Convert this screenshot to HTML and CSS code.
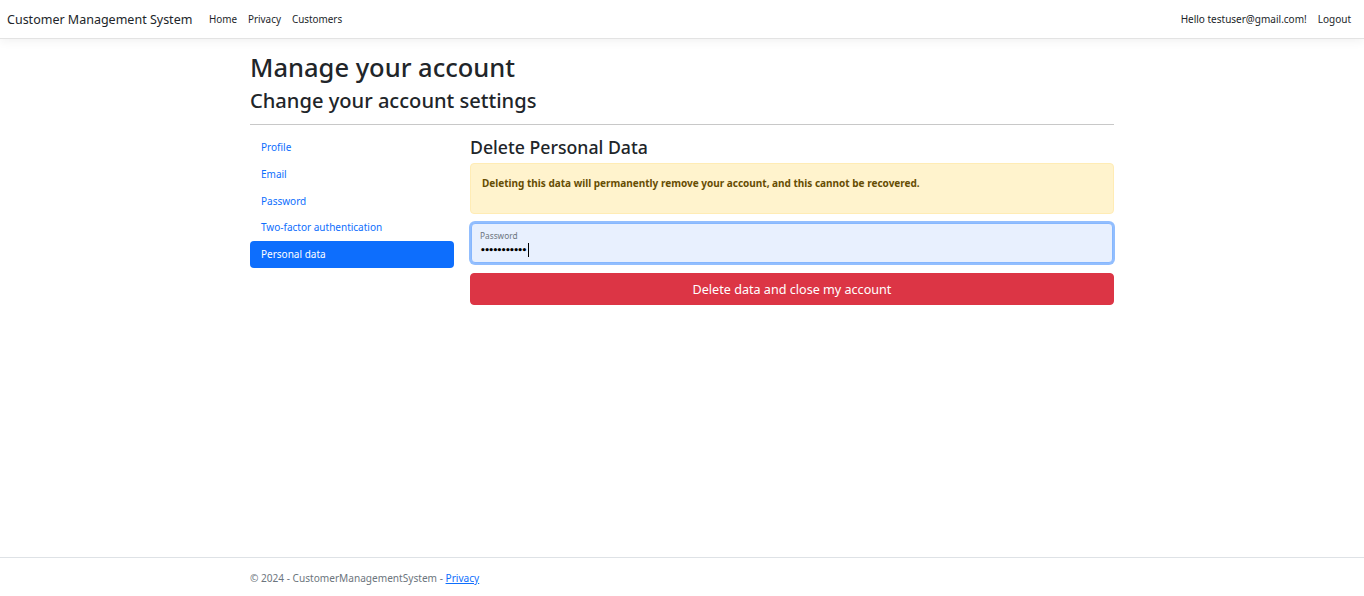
FILE: index.html
```html
<!DOCTYPE html>
<html lang="en">
<head>
<meta charset="utf-8">
<title>Personal Data - Customer Management System</title>
<link rel="stylesheet" href="styles.css">
</head>
<body>
<header class="navbar">
  <div class="nav-left">
    <a class="brand" href="#">Customer Management System</a>
    <nav class="nav-links">
      <a href="#">Home</a>
      <a href="#">Privacy</a>
      <a href="#">Customers</a>
    </nav>
  </div>
  <div class="nav-right">
    <a href="#">Hello testuser@gmail.com!</a>
    <a href="#">Logout</a>
  </div>
</header>
<main class="container">
  <h1 class="title">Manage your account</h1>
  <h2 class="subtitle">Change your account settings</h2>
  <hr class="divider">
  <div class="row">
    <aside class="side">
      <ul class="pills">
        <li><a href="#">Profile</a></li>
        <li><a href="#">Email</a></li>
        <li><a href="#">Password</a></li>
        <li><a href="#">Two-factor authentication</a></li>
        <li><a class="active" href="#">Personal data</a></li>
      </ul>
    </aside>
    <section class="content">
      <h3 class="section-title">Delete Personal Data</h3>
      <div class="alert">
        <p><strong>Deleting this data will permanently remove your account, and this cannot be recovered.</strong></p>
      </div>
      <div class="floating">
        <label class="float-label">Password</label>
        <div class="float-value"><span class="dots">•••••••••••</span><span class="caret"></span></div>
      </div>
      <button class="btn-danger" type="button">Delete data and close my account</button>
    </section>
  </div>
</main>
<footer class="footer">
  <div class="footer-inner">© 2024 - CustomerManagementSystem - <a href="#">Privacy</a></div>
</footer>
</body>
</html>
```

FILE: styles.css
```css
* { box-sizing: border-box; }
html, body { margin: 0; padding: 0; }
body {
  height: 596px;
  display: flex;
  flex-direction: column;
  font-family: "Noto Sans", "Open Sans", "Liberation Sans", sans-serif;
  color: #212529;
  background: #fff;
  font-size: 10px;
}
a { text-decoration: none; }

.navbar {
  height: 39px;
  flex: 0 0 39px;
  display: flex;
  align-items: center;
  justify-content: space-between;
  padding: 0 13px 0 7px;
  border-bottom: 1px solid #e3e3e3;
  box-shadow: 0 3px 9px rgba(0,0,0,0.05);
}
.nav-left { display: flex; align-items: center; }
.brand { font-size: 12.5px; color: #212529; margin-right: 11px; }
.nav-links { display: flex; }
.nav-links a { color: #212529; padding: 0 5.5px; font-size: 9.9px; }
.nav-right { display: flex; }
.nav-right a { color: #212529; padding: 0 5.5px; font-size: 10px; }
.nav-right a:last-child { padding-right: 0; }

.container {
  flex: 1;
  width: 864px;
  margin: 0 auto;
  padding-top: 12px;
}
.title { font-size: 25.5px; font-weight: 500; margin: 0; line-height: 32px; }
.subtitle { font-size: 20.1px; font-weight: 500; margin: 3px 0 0; line-height: 30px; }
.divider { border: 0; border-top: 1px solid #c8c8c8; margin: 8px 0 9px; }

.row { display: flex; gap: 16px; }
.side { width: 204px; flex: 0 0 204px; }
.pills { list-style: none; margin: 0; padding: 0; }
.pills a {
  display: block;
  height: 26.8px;
  line-height: 25.8px;
  padding: 1px 11px 0;
  color: #0d6efd;
  border-radius: 4px;
  font-size: 10px;
}
.pills a.active { background: #0d6efd; color: #fff; }

.content { flex: 1; }
.section-title { font-size: 17.7px; font-weight: 500; margin: 1px 0 4px; line-height: 24px; }
.alert {
  background: #fff3cd;
  border: 1px solid #ffecb5;
  color: #664d03;
  border-radius: 4px;
  padding: 12px 11px;
  margin-bottom: 9px;
}
.alert p { margin: 0 0 11px; font-size: 10px; line-height: 14px; }
.alert strong { font-weight: 700; }

.floating {
  height: 40px;
  background: #e8f0fe;
  border: 1px solid #86b7fe;
  border-radius: 4px;
  box-shadow: 0 0 0 2px rgba(13,110,253,0.45);
  padding: 6px 8px 0;
  margin: 0 1px 10px;
}
.float-label { display: block; font-size: 8.3px; color: #6c757d; line-height: 12px; }
.float-value { display: flex; align-items: center; height: 16px; }
.dots { font-size: 9px; letter-spacing: -1.6px; color: #000; font-family: "DejaVu Sans", sans-serif; font-weight: 700; }
.caret { display: inline-block; width: 1px; height: 14px; background: #000; margin-left: 2px; }

.btn-danger {
  display: block;
  width: 100%;
  height: 32px;
  background: #dc3545;
  border: 1px solid #dc3545;
  border-radius: 4px;
  color: #fff;
  font-family: inherit;
  font-size: 12.6px;
}

.footer {
  flex: 0 0 39px;
  border-top: 1px solid #dee2e6;
  color: #6c757d;
  display: flex;
  align-items: center;
  padding-top: 2px;
}
.footer-inner { width: 864px; margin: 0 auto; font-size: 10.1px; }
.footer-inner a { color: #0d6efd; text-decoration: underline; }
```
